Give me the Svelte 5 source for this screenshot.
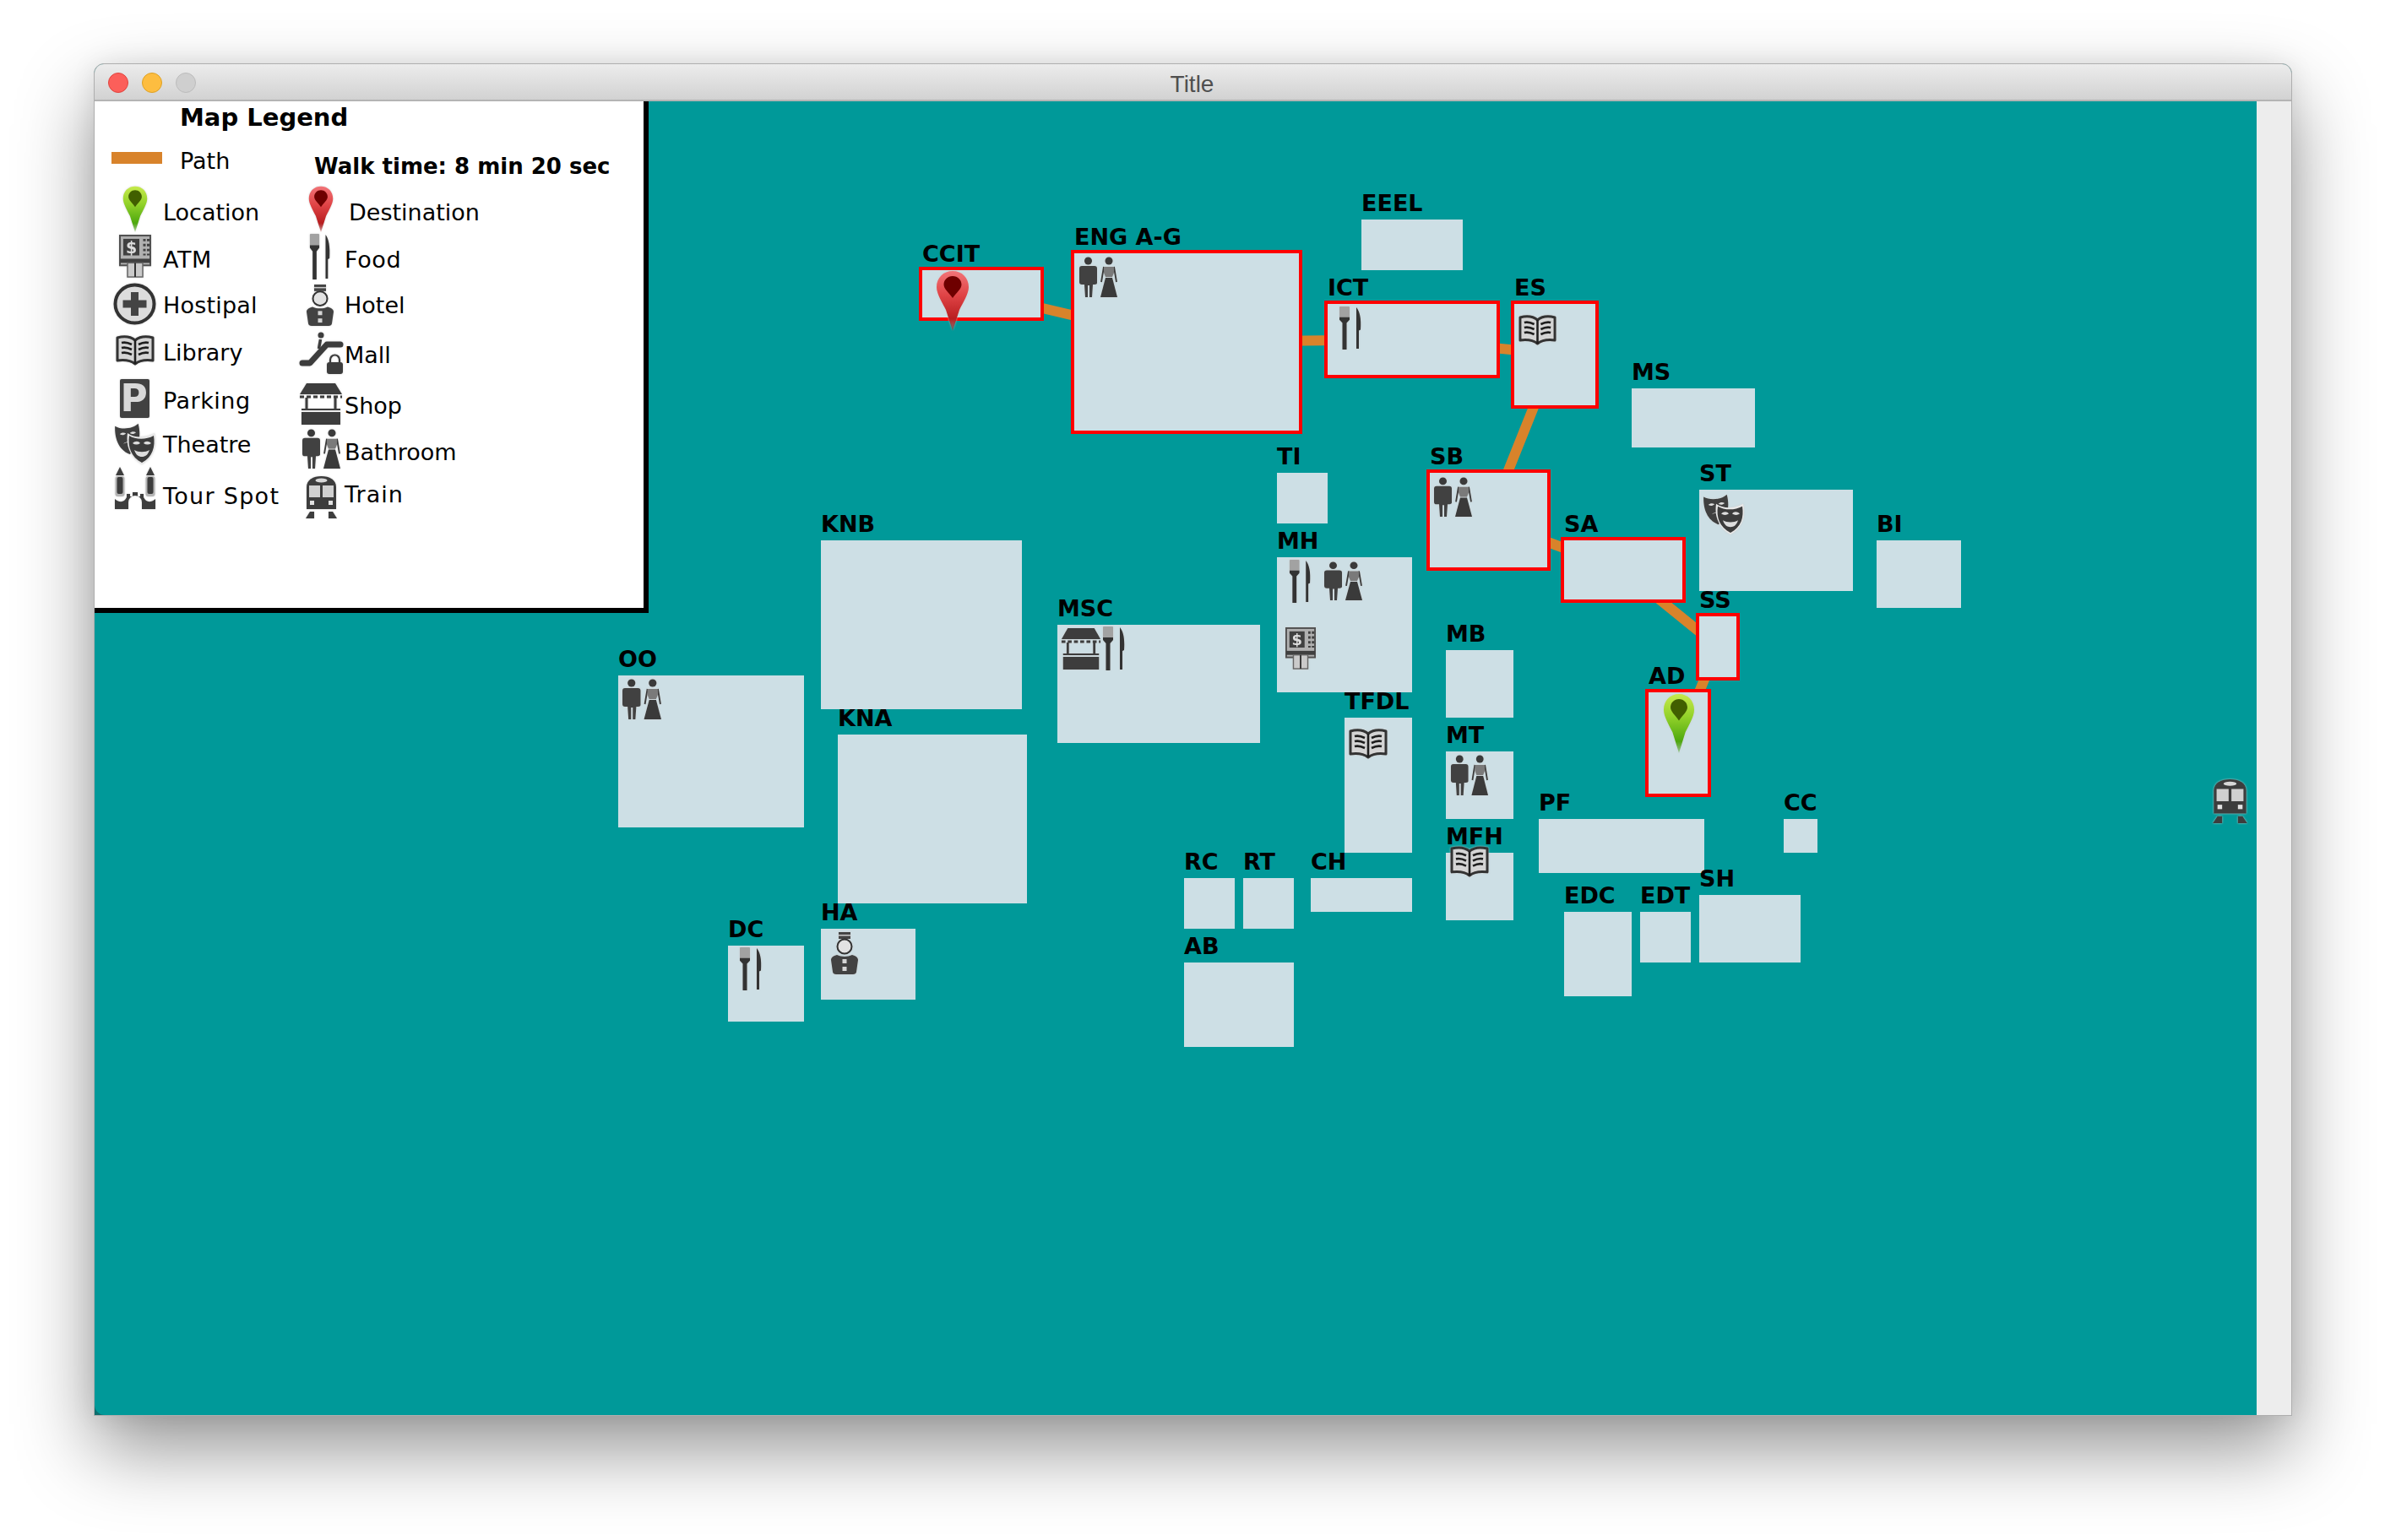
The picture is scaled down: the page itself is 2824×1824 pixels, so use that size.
<script>
  const OX = 112, OY = 120;
  const buildings = [
    { n: 'CCIT', x: 1092, y: 320, r: 1232, b: 376, sel: true },
    { n: 'ENG A-G', x: 1272, y: 300, r: 1538, b: 510, sel: true },
    { n: 'EEEL', x: 1612, y: 260, r: 1732, b: 320 },
    { n: 'ICT', x: 1572, y: 360, r: 1772, b: 444, sel: true },
    { n: 'ES', x: 1793, y: 360, r: 1889, b: 480, sel: true },
    { n: 'MS', x: 1932, y: 460, r: 2078, b: 530 },
    { n: 'TI', x: 1512, y: 560, r: 1572, b: 620 },
    { n: 'SB', x: 1693, y: 560, r: 1832, b: 672, sel: true },
    { n: 'ST', x: 2012, y: 580, r: 2194, b: 700 },
    { n: 'SA', x: 1852, y: 640, r: 1992, b: 710, sel: true },
    { n: 'BI', x: 2222, y: 640, r: 2322, b: 720 },
    { n: 'SS', x: 2012, y: 730, r: 2056, b: 802, sel: true },
    { n: 'KNB', x: 972, y: 640, r: 1210, b: 840 },
    { n: 'MH', x: 1512, y: 660, r: 1672, b: 820 },
    { n: 'MSC', x: 1252, y: 740, r: 1492, b: 880 },
    { n: 'MB', x: 1712, y: 770, r: 1792, b: 850 },
    { n: 'OO', x: 732, y: 800, r: 952, b: 980 },
    { n: 'AD', x: 1952, y: 820, r: 2022, b: 940, sel: true },
    { n: 'TFDL', x: 1592, y: 850, r: 1672, b: 1010 },
    { n: 'KNA', x: 992, y: 870, r: 1216, b: 1070 },
    { n: 'MT', x: 1712, y: 890, r: 1792, b: 970 },
    { n: 'PF', x: 1822, y: 970, r: 2018, b: 1034 },
    { n: 'CC', x: 2112, y: 970, r: 2152, b: 1010 },
    { n: 'MFH', x: 1712, y: 1010, r: 1792, b: 1090 },
    { n: 'RC', x: 1402, y: 1040, r: 1462, b: 1100 },
    { n: 'RT', x: 1472, y: 1040, r: 1532, b: 1100 },
    { n: 'CH', x: 1552, y: 1040, r: 1672, b: 1080 },
    { n: 'SH', x: 2012, y: 1060, r: 2132, b: 1140 },
    { n: 'EDC', x: 1852, y: 1080, r: 1932, b: 1180 },
    { n: 'EDT', x: 1942, y: 1080, r: 2002, b: 1140 },
    { n: 'HA', x: 972, y: 1100, r: 1084, b: 1184 },
    { n: 'DC', x: 862, y: 1120, r: 952, b: 1210 },
    { n: 'AB', x: 1402, y: 1140, r: 1532, b: 1240 }
  ];
  const route = [[1162, 348], [1405, 405], [1672, 402], [1841, 419.5], [1762.5, 616], [1922, 675], [2034, 766], [1987, 880]];
  const routePoints = route.map(([x, y]) => `${x - OX},${y - OY}`).join(' ');

  const mapIcons = [
    ['bath', 1277, 304, 1324, 353], ['food', 1585, 363, 1613, 414], ['lib', 1798, 373, 1843, 409],
    ['bath', 1697, 565, 1744, 613], ['food', 1526, 663, 1553, 714], ['bath', 1567, 665, 1614, 712],
    ['atm', 1522, 743, 1558, 793], ['mask', 2015, 583, 2066, 633], ['bath', 1717, 894, 1763, 943],
    ['lib', 1597, 863, 1643, 899], ['lib', 1717, 1002, 1763, 1039], ['bath', 736, 804, 784, 853],
    ['shop', 1256, 743, 1304, 793], ['food', 1305, 742, 1333, 794], ['food', 875, 1122, 903, 1173],
    ['hotel', 984, 1104, 1016, 1154], ['train', 2618, 922, 2663, 976],
    ['pinr', 1108, 320, 1148, 392], ['ping', 1969, 821, 2007, 892]
  ];
  const legendIcons = [
    ['ping', 145, 220, 175, 275], ['pinr', 365, 220, 395, 275], ['atm', 141, 278, 179, 329],
    ['food', 366, 277, 392, 331], ['hosp', 134, 335, 185, 385], ['hotel', 363, 337, 395, 386],
    ['lib', 137, 397, 183, 433], ['mall', 354, 393, 407, 443], ['park', 141, 449, 178, 495],
    ['shop', 354, 453, 406, 503], ['mask', 134, 499, 185, 550], ['bath', 357, 508, 404, 556],
    ['tour', 135, 553, 185, 603], ['train', 360, 563, 401, 615]
  ];
  const legendTexts = [
    ['Path', 213, 199, 0], ['Location', 193, 260, 0], ['Destination', 413, 260, 0], ['ATM', 193, 316, .6], ['Food', 408, 316, .6],
    ['Hostipal', 193, 370, .2], ['Hotel', 408, 370, 0], ['Library', 193, 426, 0], ['Mall', 408, 429, 0],
    ['Parking', 193, 483, .5], ['Shop', 408, 489, 0], ['Theatre', 193, 535, 0], ['Bathroom', 408, 544, 0],
    ['Tour Spot', 193, 596, 1.3], ['Train', 408, 594, 1]
  ];
  // Signs inside two pictograms stay real text, laid over the shared symbol.
  const signs = {
    atm: { vb: '0 0 38 52', x: 14.5, y: 22, fs: 19, fill: '#ddd', t: '$' },
    park: { vb: '0 0 37 46', x: 17.5, y: 38, fs: 44, fill: '#d8d8d8', t: 'P' }
  };
  const box = (i) => `left:${i[1] - OX}px;top:${i[2] - OY}px;width:${i[3] - i[1]}px;height:${i[4] - i[2]}px`;
  const txt = (x, y, fs, ls = 0) => `left:${x - OX}px;top:${y + 1 - OY - 0.846 * fs}px;letter-spacing:${ls}px`;
</script>

{#snippet icon(i)}
  <svg class="ic" style={box(i)} viewBox={signs[i[0]]?.vb} preserveAspectRatio="none">
    <use href="#{i[0]}" width="100%" height="100%" />
    {#if signs[i[0]]}
      <text class="sign" x={signs[i[0]].x} y={signs[i[0]].y} font-size={signs[i[0]].fs} fill={signs[i[0]].fill}>{signs[i[0]].t}</text>
    {/if}
  </svg>
{/snippet}

<div class="desktop">
  <div class="window">
    <header class="titlebar">
      <div class="lights"><i class="red"></i><i class="yellow"></i><i class="grey"></i></div>
      <span class="title">Title</span>
    </header>
    <div class="content">
      <main class="map">
        <svg class="defs" width="0" height="0">
          <defs>
            <linearGradient id="gr" x1="0" y1="0" x2="0" y2="1">
              <stop offset="0" stop-color="#f27478" /><stop offset=".4" stop-color="#e04446" />
              <stop offset=".8" stop-color="#b81e20" /><stop offset="1" stop-color="#a01010" stop-opacity=".3" />
            </linearGradient>
            <linearGradient id="gg" x1="0" y1="0" x2="0" y2="1">
              <stop offset="0" stop-color="#c6ea4c" /><stop offset=".38" stop-color="#93d22a" />
              <stop offset=".8" stop-color="#4ea80e" /><stop offset="1" stop-color="#3d9a08" stop-opacity=".3" />
            </linearGradient>
          </defs>
          <symbol id="pinr" viewBox="0 0 40 72" preserveAspectRatio="none">
            <path fill="url(#gr)" d="M20 1C9 1 1 9 1 20c0 8 7 19 11 27l8 25 8-25c4-8 11-19 11-27C39 9 31 1 20 1z" />
            <path fill="#6e0000" d="M20 7c-6 0-10.500 4.500-10.500 10 0 5 5.500 9 10.500 16 5-7 10.500-11 10.500-16 0-5.500-4.500-10-10.500-10z" />
          </symbol>
          <symbol id="ping" viewBox="0 0 40 72" preserveAspectRatio="none">
            <path fill="url(#gg)" d="M20 1C9 1 1 9 1 20c0 8 7 19 11 27l8 25 8-25c4-8 11-19 11-27C39 9 31 1 20 1z" />
            <path fill="#415f00" d="M20 7c-6 0-10.500 4.500-10.500 10 0 5 5.500 9 10.500 16 5-7 10.500-11 10.500-16 0-5.500-4.500-10-10.500-10z" />
          </symbol>
          <symbol id="food" viewBox="0 0 28 52" preserveAspectRatio="none">
            <rect x="1" y="0" width="12" height="14" rx="1" fill="#a2a2a2" />
            <path fill="#333" d="M1 13h12v3l-3.500 4v32h-5V20L1 16z" />
            <path fill="#333" d="M21 1c4 5 6 13 5 27l-2 1v22h-3z" />
          </symbol>
          <symbol id="hotel" viewBox="0 0 32 50" preserveAspectRatio="none">
            <rect x="9" y="0" width="14" height="8" fill="#444" /><rect x="9" y="3" width="14" height="1.500" fill="#ccc" />
            <circle cx="16" cy="17" r="8.500" fill="#e2e2e2" stroke="#333" stroke-width="2" />
            <path fill="#424242" d="M7 27c5 2.500 13 2.500 18 0 4 1 7 3 7 6l-2 14c0 2-2 3-4 3H6c-2 0-4-1-4-3L0 33c0-3 3-5 7-6z" />
            <rect x="13.500" y="32" width="5" height="5" fill="#d5d5d5" /><rect x="13.500" y="41" width="5" height="5" fill="#d5d5d5" />
          </symbol>
          <symbol id="atm" viewBox="0 0 38 52" preserveAspectRatio="none">
            <rect x="1" y="1" width="36" height="36" fill="#b0b0b0" stroke="#505050" stroke-width="2" />
            <rect x="5" y="5" width="19" height="20" fill="#404040" />
            <path stroke="#404040" stroke-width="3" stroke-dasharray="3 3" d="M30 5v20M34.500 5v20" />
            <rect x="1" y="29" width="36" height="5" fill="#404040" />
            <rect x="10" y="34" width="18" height="17" fill="#cacaca" stroke="#666" stroke-width="1.500" />
            <path d="M19 34v17" stroke="#333" stroke-width="2" />
          </symbol>
          <symbol id="hosp" viewBox="0 0 51 50" preserveAspectRatio="none">
            <ellipse cx="25.500" cy="25" rx="23" ry="22.500" fill="#dcdcdc" stroke="#333" stroke-width="4" />
            <path d="M25.500 11v28M11.500 25h28" stroke="#444" stroke-width="9" />
          </symbol>
          <symbol id="lib" viewBox="0 0 46 36" preserveAspectRatio="none">
            <path fill="#d4d4d4" stroke="#333" stroke-width="3" stroke-linejoin="round" d="M2 3c8-2 16-1 21 3 5-4 13-5 21-3v27c-8-1-16 0-21 4-5-4-13-5-21-4z" />
            <path fill="none" stroke="#1e1e1e" stroke-width="2.600" d="M23 6v28M7 9c4-1 8 0 12 2M7 15c4-1 8 0 12 2M7 21c4-1 8 0 12 2M39 9c-4-1-8 0-12 2M39 15c-4-1-8 0-12 2M39 21c-4-1-8 0-12 2" />
          </symbol>
          <symbol id="mall" viewBox="0 0 53 50" preserveAspectRatio="none">
            <path fill="none" stroke="#3d3d3d" stroke-width="7" stroke-linecap="round" stroke-linejoin="round" d="M4 37h9l20-22h16" />
            <circle cx="26" cy="4" r="3.500" fill="#3d3d3d" /><path d="M25.500 9l-2 11" stroke="#3d3d3d" stroke-width="3.500" />
            <path fill="none" stroke="#3d3d3d" stroke-width="2.200" d="M37 37v-4a5.500 5.500 0 0 1 11 0v4" />
            <rect x="33" y="36" width="19" height="14" rx="3" fill="#3d3d3d" />
          </symbol>
          <symbol id="park" viewBox="0 0 37 46" preserveAspectRatio="none">
            <rect x="1" y="0" width="35" height="46" rx="2" fill="#414141" />
          </symbol>
          <symbol id="shop" viewBox="0 0 52 50" preserveAspectRatio="none">
            <path fill="#3d3d3d" d="M9 1h34l8 13H1z" />
            <path stroke="#3d3d3d" stroke-width="3" stroke-dasharray="5 3" d="M1 17h50" />
            <path stroke="#3d3d3d" stroke-width="3" d="M9 18v14M43 18v14" />
            <path stroke="#3d3d3d" stroke-width="2" d="M3 32h46" />
            <rect x="3" y="35" width="46" height="15" fill="#3d3d3d" />
          </symbol>
          <symbol id="bath" viewBox="0 0 47 49" preserveAspectRatio="none">
            <circle cx="11.500" cy="5" r="4.500" fill="#3a3a3a" />
            <path fill="#414141" d="M4 11h15c2 0 3 1 3 3v17c0 1-1 2-3 2h-2l-1 15h-3V34h-2v14H8l-1-15H4c-2 0-3-1-3-3V14c0-2 1-3 3-3z" />
            <circle cx="36" cy="5" r="4.500" fill="#3a3a3a" />
            <path fill="none" stroke="#3a3a3a" stroke-width="1.800" d="M30 12l-3 18M42 12l3 18" />
            <path fill="#7a7a7a" d="M30 12h12v7l-2 5h-8l-2-5z" />
            <path fill="#3a3a3a" d="M32 25h8l6 23H26z" />
          </symbol>
          <symbol id="mask" viewBox="0 0 51 51" preserveAspectRatio="none">
            <g transform="translate(1 3) rotate(-6) scale(.92)">
              <path fill="#3f3f3f" d="M1 3c8 6 22 6 30 0 2 13 0 30-15 38C1 33-1 16 1 3z" />
              <path fill="#ddd" d="M6 14c2-2 6-2 8 0-3 2-5 2-8 0zM19 14c2-2 6-2 8 0-3 2-5 2-8 0zM9 27c4-3 10-3 14 0-4-2-10-2-14 0z" />
            </g>
            <path fill="#e8e8e8" d="M17 14c8 6 22 6 32 0 3 14 0 28-15 37-15-9-19-23-17-37z" />
            <path fill="#3c3c3c" d="M19 17c8 5 20 5 29 0 2 13-1 25-14 32C21 42 17 30 19 17z" />
            <path fill="#ddd" d="M23 26c3-3 7-3 9 0-3 2-6 2-9 0zM36 26c2-3 6-3 9 0-3 2-6 2-9 0zM25 34c5 3 13 3 18 0-2 6-5 8-9 8s-7-2-9-8z" />
          </symbol>
          <symbol id="tour" viewBox="0 0 50 50" preserveAspectRatio="none">
            <path fill="#3d3d3d" d="M7 0l5 10H2zM43 0l5 10H38z" />
            <rect x="1.500" y="11" width="11" height="24" rx="3" fill="#b5b5b5" /><rect x="37.500" y="11" width="11" height="24" rx="3" fill="#b5b5b5" />
            <rect x="3.500" y="12" width="7" height="20" rx="2" fill="#3d3d3d" /><rect x="39.500" y="12" width="7" height="20" rx="2" fill="#3d3d3d" />
            <path fill="#3d3d3d" d="M1 50V38c6 5 11 4 14-2v-4h4v3h3v-5h6v5h3v-3h4v4c3 6 8 7 14 2v12H33V42a8 8 0 0 0-16 0v8z" />
          </symbol>
          <symbol id="train" viewBox="0 0 41 52" preserveAspectRatio="none">
            <path fill="#3d3d3d" d="M3 40V14C3 5 11 1 20.500 1S38 5 38 14v26z" />
            <ellipse cx="20.500" cy="6" rx="7" ry="2.500" fill="#d8d8d8" />
            <rect x="6" y="12" width="13" height="14" fill="#d0d0d0" /><rect x="22" y="12" width="13" height="14" fill="#d0d0d0" />
            <rect x="7" y="30" width="5" height="5" fill="#e2e2e2" /><rect x="29" y="30" width="5" height="5" fill="#e2e2e2" />
            <path fill="#3d3d3d" d="M7 43h5v8H2zM29 43h5l5 8H29z" />
          </symbol>
        </svg>

        <svg class="route" width="2560" height="1556">
          <polyline points={routePoints} fill="none" stroke="#d8832b" stroke-width="12" />
        </svg>

        {#each buildings as b}
          <div class="bldg" class:sel={b.sel} style="left:{b.x - OX}px;top:{b.y - OY}px;width:{b.r - b.x}px;height:{b.b - b.y}px"></div>
        {/each}
        {#each buildings as b}
          <span class="label" style={txt(b.x, b.y - 11, 27)}>{b.n}</span>
        {/each}
        {#each mapIcons as i}
          {@render icon(i)}
        {/each}

        <aside class="legend">
          <span class="lt head" style={txt(213, 149, 29)}>Map Legend</span>
          <span class="lt walk" style={txt(372, 205, 26)}>Walk time: 8 min 20 sec</span>
          <i class="swatch"></i>
          {#each legendTexts as t}
            <span class="lt" style={txt(t[1], t[2], 27, t[3])}>{t[0]}</span>
          {/each}
          {#each legendIcons as i}
            {@render icon(i)}
          {/each}
        </aside>
      </main>
      <div class="side"></div>
    </div>
  </div>
</div>

<style>
  :global(body) { margin: 0; background: #fff; overflow: hidden; }
  .desktop { box-sizing: border-box; width: 2824px; height: 1824px; padding: 75px 0 0 111px; }
  .window {
    width: 2601px;
    border: 1px solid #aeaeae;
    border-radius: 12px 12px 0 0;
    background: #0d6d6d;
    box-shadow: 0 40px 90px rgba(0, 0, 0, .42), 0 0 30px rgba(0, 0, 0, .08);
  }
  .titlebar {
    position: relative;
    box-sizing: border-box;
    height: 44px;
    padding-top: 5px;
    display: flex;
    align-items: center;
    justify-content: center;
    border-bottom: 2px solid #b4b4b4;
    border-radius: 11px 11px 0 0;
    background: linear-gradient(#ececec, #d2d2d2);
  }
  .lights { position: absolute; left: 16px; top: 10px; display: flex; gap: 16px; }
  .lights i { display: block; box-sizing: border-box; width: 24px; height: 24px; border-radius: 50%; border: 1px solid; }
  .red { background: #fc5f5a; border-color: #e0443e !important; }
  .yellow { background: #fdbd40; border-color: #dea123 !important; }
  .grey { background: #cfcfcf; border-color: #bcbcbc !important; }
  .title { font: 28px "Liberation Sans", sans-serif; color: #4f4f4f; margin-left: -2px; }
  .content { display: flex; height: 1556px; }
  .map { position: relative; width: 2560px; flex: none; background: #009999; border-bottom-left-radius: 12px; }
  .side { flex: 1; background: #ededed; }
  .defs { position: absolute; }
  .route { position: absolute; left: 0; top: 0; }
  .bldg { position: absolute; background: #cddfe5; }
  .sel { outline: 4px solid #f00; }
  .label {
    position: absolute;
    font: 700 27px/1 "DejaVu Sans", sans-serif;
    color: #000;
    white-space: nowrap;
  }
  .ic {
    position: absolute;
    overflow: visible;
    filter: drop-shadow(0 0 1.2px rgba(205, 205, 205, .9)) blur(.4px);
  }
  .sign { font-family: "DejaVu Sans", sans-serif; font-weight: 700; text-anchor: middle; }
  .legend {
    position: absolute;
    left: 0;
    top: 0;
    width: 650px;
    height: 600px;
    background: #fff;
    border-right: 6px solid #000;
    border-bottom: 6px solid #000;
  }
  .lt {
    position: absolute;
    font: 27px/1 "DejaVu Sans", sans-serif;
    color: #000;
    white-space: nowrap;
  }
  .head { font-size: 29px; font-weight: 700; }
  .walk { font-size: 26px; font-weight: 700; }
  .swatch { position: absolute; left: 20px; top: 60px; width: 60px; height: 14px; background: #d8832b; }
</style>
